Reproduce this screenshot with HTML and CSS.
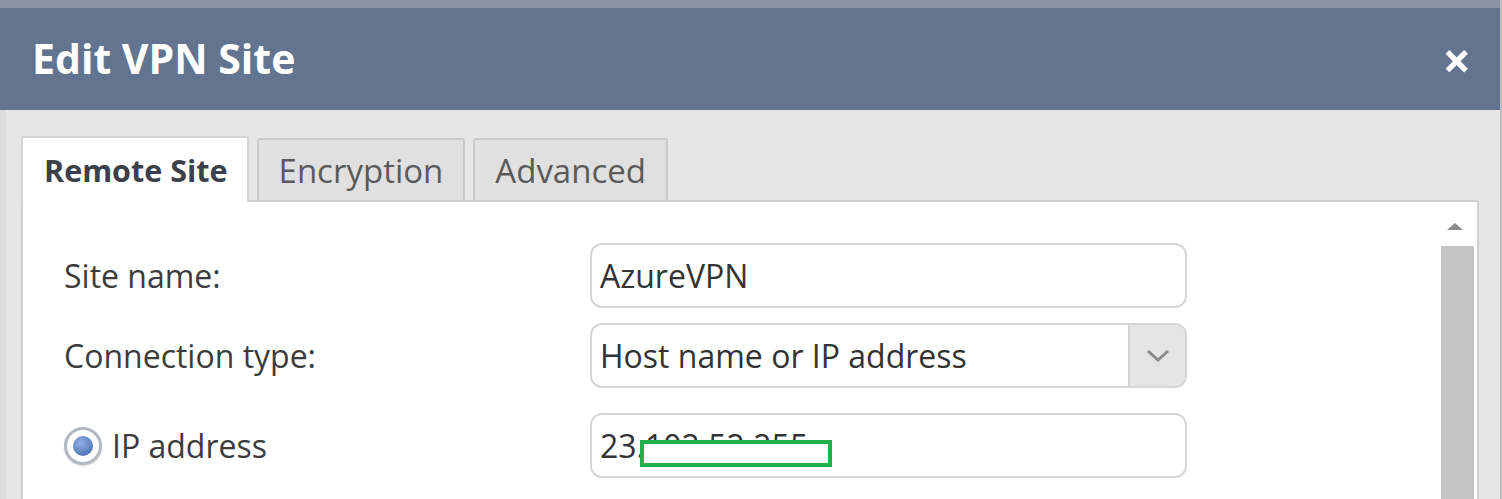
FILE: index.html
```html
<!DOCTYPE html>
<html>
<head>
<meta charset="utf-8">
<link rel="stylesheet" href="styles.css">
</head>
<body>
<div class="dialog">
  <div class="titlebar">
    <h1 class="title">Edit VPN Site</h1>
    <span class="close">×</span>
  </div>
  <div class="body">
    <div class="tabs">
      <div class="tab active">Remote Site</div>
      <div class="tab">Encryption</div>
      <div class="tab">Advanced</div>
    </div>
    <div class="panel">
      <div class="form">
        <div class="row row1">
          <label class="label">Site name:</label>
          <div class="input">AzureVPN</div>
        </div>
        <div class="row row2">
          <label class="label">Connection type:</label>
          <div class="input select">
            <span class="select-text">Host name or IP address</span>
            <span class="select-btn">
              <svg width="26" height="16" viewBox="0 0 26 16"><path d="M3 3 L13 12 L23 3" fill="none" stroke="#8a8a8a" stroke-width="3"/></svg>
            </span>
          </div>
        </div>
        <div class="row row3">
          <label class="label radio-label"><span class="radio"><span class="dot"></span></span>IP address</label>
          <div class="input ip">23.102.52.255<span class="redact"></span></div>
        </div>
      </div>
      <div class="scrollbar">
        <div class="sb-up"><span class="tri"></span></div>
        <div class="sb-thumb"></div>
      </div>
    </div>
  </div>
</div>
</body>
</html>
```
FILE: styles.css
```css
html, body {
  margin: 0;
  padding: 0;
  height: 100%;
  overflow: hidden;
}
body {
  background: #e6e6e6;
  font-family: "Open Sans", "DejaVu Sans", sans-serif;
}
.dialog {
  height: 499px;
  display: flex;
  flex-direction: column;
  border-right: 2px solid #bfbfbf;
}
.titlebar {
  height: 102px;
  border-top: 8px solid #8a93a4;
  background: #627490;
  display: flex;
  align-items: center;
  justify-content: space-between;
  padding: 0 29px 0 32px;
  flex: none;
}
.title {
  margin: 0;
  color: #fff;
  font-size: 41px;
  font-weight: 700;
  position: relative;
  top: -1px;
}
.close {
  color: #fff;
  font-size: 50px;
  font-weight: 700;
  line-height: 1;
  position: relative;
  top: 1px;
}
.body {
  flex: 1;
  display: flex;
  flex-direction: column;
  padding: 26px 21px 0 21px;
  border-left: 6px solid #dcdcdc;
}
.tabs {
  display: flex;
  align-items: flex-end;
  height: 64px;
  position: relative;
  z-index: 1;
}
.tab {
  height: 62px;
  box-sizing: border-box;
  padding: 0 20px;
  display: flex;
  align-items: center;
  font-size: 33px;
  color: #5a5a5a;
  background: #e0e0e0;
  border: 2px solid #c9c9c9;
  border-bottom: none;
  margin-left: 8px;
  border-radius: 3px 3px 0 0;
}
.tab.active {
  height: 66px;
  margin-left: -6px;
  margin-bottom: -2px;
  background: #fff;
  font-size: 30.5px;
  font-weight: 700;
  color: #3b404b;
  border-color: #d4d4d4;
  padding: 0 19px 0 21px;
}
.panel {
  flex: 1;
  background: #fff;
  border: 2px solid #cfcfcf;
  border-bottom: none;
  margin-left: -6px;
  display: flex;
}
.form {
  flex: 1;
  padding: 41px 0 0 41px;
}
.row {
  display: flex;
  align-items: center;
}
.row2 { margin-top: 15px; }
.row3 { margin-top: 25px; }
.label {
  width: 526px;
  font-size: 32px;
  color: #3c3c3c;
}
.input {
  width: 597px;
  height: 65px;
  box-sizing: border-box;
  border: 2px solid #d6d6d6;
  border-radius: 12px;
  font-size: 32px;
  color: #333;
  padding-left: 8px;
  display: flex;
  align-items: center;
  position: relative;
}
.select {
  padding-left: 0;
  overflow: hidden;
}
.select-text {
  flex: 1;
  padding-left: 8px;
}
.select-btn {
  width: 55px;
  height: 100%;
  background: #e4e4e4;
  border-left: 2px solid #d2d2d2;
  display: flex;
  align-items: center;
  justify-content: center;
}
.radio-label {
  display: flex;
  align-items: center;
}
.radio {
  width: 38px;
  height: 38px;
  box-sizing: border-box;
  border-radius: 50%;
  border: 3px solid #b4b8c0;
  background: #fff;
  display: flex;
  align-items: center;
  justify-content: center;
  margin-right: 10px;
  box-shadow: 0 1px 2px rgba(0,0,0,0.15);
}
.dot {
  width: 20px;
  height: 20px;
  border-radius: 50%;
  background: radial-gradient(circle at 40% 35%, #8fb0e6, #3d63a8);
}
.redact {
  position: absolute;
  left: 48px;
  top: 25px;
  width: 192px;
  height: 27px;
  box-sizing: border-box;
  border: 4px solid #22b04b;
  background: #fff;
}
.scrollbar {
  width: 38px;
  margin-right: 3px;
  padding-top: 4px;
  display: flex;
  flex-direction: column;
  align-items: flex-end;
}
.sb-up {
  width: 38px;
  height: 40px;
  display: flex;
  align-items: center;
  justify-content: center;
}
.tri {
  width: 0;
  height: 0;
  border-left: 8px solid transparent;
  border-right: 8px solid transparent;
  border-bottom: 7px solid #8c8c8c;
}
.sb-thumb {
  flex: 1;
  width: 33px;
  background: #c4c4c4;
}
```
